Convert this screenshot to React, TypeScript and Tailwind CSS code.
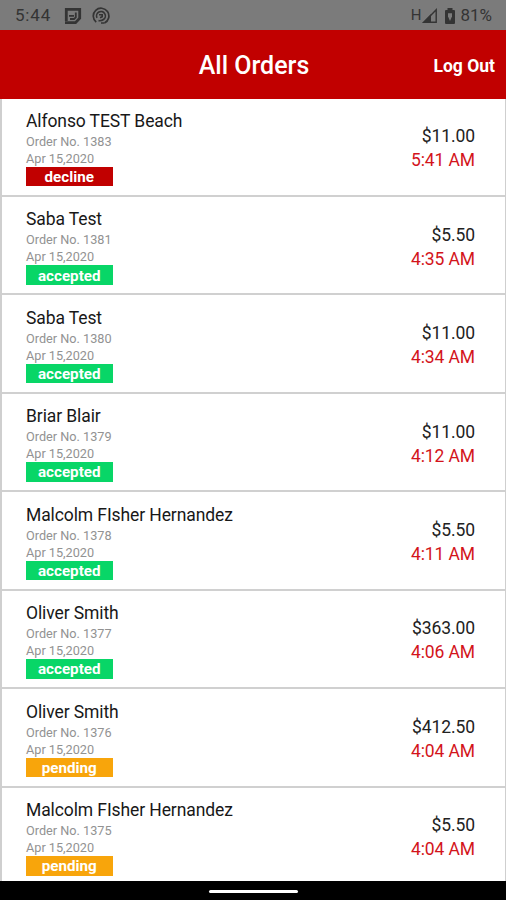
type Status = "decline" | "accepted" | "pending"

interface Order {
  id: number
  name: string
  date: string
  total: string
  time: string
  status: Status
}

const orders: Order[] = [
  { id: 1383, name: "Alfonso TEST Beach", date: "Apr 15,2020", total: "$11.00", time: "5:41 AM", status: "decline" },
  { id: 1381, name: "Saba Test", date: "Apr 15,2020", total: "$5.50", time: "4:35 AM", status: "accepted" },
  { id: 1380, name: "Saba Test", date: "Apr 15,2020", total: "$11.00", time: "4:34 AM", status: "accepted" },
  { id: 1379, name: "Briar Blair", date: "Apr 15,2020", total: "$11.00", time: "4:12 AM", status: "accepted" },
  { id: 1378, name: "Malcolm FIsher Hernandez", date: "Apr 15,2020", total: "$5.50", time: "4:11 AM", status: "accepted" },
  { id: 1377, name: "Oliver Smith", date: "Apr 15,2020", total: "$363.00", time: "4:06 AM", status: "accepted" },
  { id: 1376, name: "Oliver Smith", date: "Apr 15,2020", total: "$412.50", time: "4:04 AM", status: "pending" },
  { id: 1375, name: "Malcolm FIsher Hernandez", date: "Apr 15,2020", total: "$5.50", time: "4:04 AM", status: "pending" },
]

const statusColors: Record<Status, string> = {
  decline: "bg-[#c10000]",
  accepted: "bg-[#08d667]",
  pending: "bg-[#f8a50b]",
}

const StatusBar = () => (
  <div className="flex h-[30px] shrink-0 items-center justify-between bg-[#7b7b7b] pl-[15px] pr-[14px] text-[#343434]">
    <div className="flex items-center pt-px">
      <span className="w-[49px] text-[17px] leading-none tracking-[0.8px]">5:44</span>
      <svg width="18" height="18" viewBox="0 0 18 18" fill="none" stroke="currentColor">
        <path d="M2.3 14V2.3h13.4v8.9l-4.2 4.5H1" strokeWidth="2.8" />
        <path d="M5 8.8h5M11.8 5.5v4.8L10 12H6" strokeWidth="1.8" />
      </svg>
      <svg className="ml-[10px]" width="18" height="18" viewBox="0 0 18 18" fill="none" stroke="currentColor">
        <path d="M4.2 15.1A7.8 7.8 0 1 1 12.5 16" strokeWidth="1.7" />
        <path d="M5 10.8A4.4 4.4 0 1 1 11.5 12.5Q9.5 14 6.5 13.6" strokeWidth="1.6" />
        <path d="M7 7.8h3.2v2L8 10.8M12.5 16H9" strokeWidth="1.6" />
      </svg>
    </div>
    <div className="flex items-center pt-px">
      <span className="text-[15px] leading-none">H</span>
      <svg width="17" height="16" viewBox="0 0 17 16">
        <path d="M15.2 1.8v12.4H3z" fill="none" stroke="currentColor" strokeWidth="1.4" />
        <path d="M1 14.9 10 6v8.9z" fill="currentColor" />
      </svg>
      <svg className="ml-[6px]" width="12" height="16" viewBox="0 0 12 16">
        <path d="M3.5 0h5v2H10a1 1 0 0 1 1 1v12a1 1 0 0 1-1 1H2a1 1 0 0 1-1-1V3a1 1 0 0 1 1-1h1.5z" fill="currentColor" />
        <path d="M4 5.2h4v3.2L6 13 4 8.4z" fill="#7b7b7b" />
      </svg>
      <span className="ml-[4px] text-[17px] leading-none">81%</span>
    </div>
  </div>
)

const Header = () => (
  <header className="grid h-[68.5px] shrink-0 grid-cols-[1fr_auto_1fr] items-center bg-[#c10000] pr-[11px] pl-[13px] text-white">
    <h1 className="col-start-2 pt-[3px] text-[25px] leading-none font-medium">All Orders</h1>
    <button className="justify-self-end pt-[4px] text-[17.5px] leading-none font-bold">Log Out</button>
  </header>
)

const OrderRow = ({ order }: { order: Order }) => (
  <li className="flex h-[98.45px] shrink-0 justify-between border-b-2 border-[#d0d0d0] pl-6 pr-[30px]">
    <div className="pt-[12.4px]">
      <h2 className="text-[17.5px] leading-[21px] tracking-[-0.1px] text-[#181818]">{order.name}</h2>
      <p className="pt-[1.1px] text-[12.7px] leading-[17px] text-[#929292]">Order No. {order.id}</p>
      <p className="text-[12.7px] leading-[17px] text-[#929292]">{order.date}</p>
      <span
        className={`flex h-[19.5px] w-[86.5px] items-center justify-center pt-[2px] text-[15.2px] leading-none font-bold text-white ${statusColors[order.status]}`}
      >
        {order.status}
      </span>
    </div>
    <div className="pt-[25.7px] text-right text-[17.5px] leading-[24px] tracking-[-0.1px]">
      <p className="text-[#222]">{order.total}</p>
      <p className="text-[#d3141b]">{order.time}</p>
    </div>
  </li>
)

const App = () => {
  return (
    <div className="flex h-[900px] w-[506px] flex-col overflow-hidden bg-white font-['Roboto',sans-serif]">
      <StatusBar />
      <Header />
      <ul className="flex min-h-0 flex-1 flex-col overflow-hidden border-l-2 border-r border-[#cfcfcf]">
        {orders.map((order) => (
          <OrderRow key={order.id} order={order} />
        ))}
      </ul>
      <div className="flex h-[19px] shrink-0 items-center justify-center bg-black pt-[2px]">
        <div className="h-[3px] w-[89px] rounded-full bg-white" />
      </div>
    </div>
  )
}

export default App
